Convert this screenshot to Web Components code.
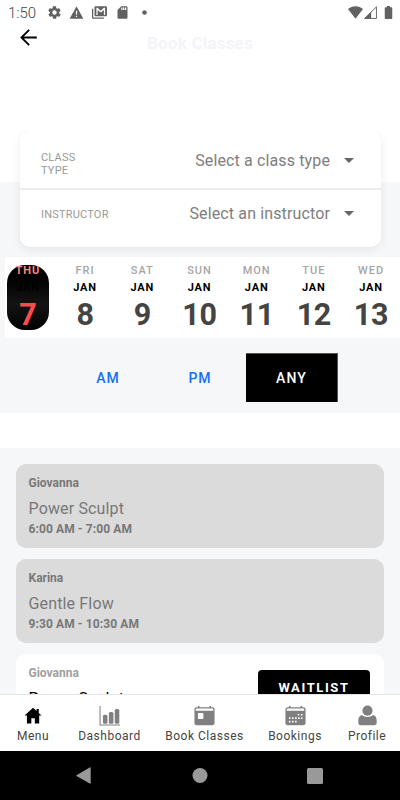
<!DOCTYPE html>
<html lang="en">
<head>
<meta charset="utf-8">
<meta name="viewport" content="width=device-width, initial-scale=1">
<title>Book Classes</title>
<style>
  html, body { margin: 0; height: 100%; }
  body {
    font-family: Roboto, "Liberation Sans", sans-serif;
    background: #fff;
    overflow: hidden;
  }
</style>
</head>
<body>
<booking-app></booking-app>

<script>
const ICONS = {
  gear: '<path d="M19.4 13c0-.3.1-.6.1-1s0-.7-.1-1l2.100-1.600c.2-.2.3-.4.100-.6l-2-3.500c-.1-.2-.4-.3-.6-.2l-2.500 1c-.5-.4-1.100-.7-1.700-1l-.4-2.600c0-.3-.2-.5-.5-.5h-4c-.3 0-.5.2-.5.4l-.4 2.700c-.6.2-1.100.6-1.700 1l-2.500-1c-.2-.1-.5 0-.6.2l-2 3.500c-.1.2-.1.5.1.600L4.600 11c0 .3-.1.7-.1 1s0 .7.1 1l-2.100 1.600c-.2.200-.3.400-.1.700l2 3.400c.1.200.4.300.6.200l2.500-1c.5.400 1.100.7 1.700 1l.4 2.700c0 .2.2.400.5.400h4c.3 0 .5-.2.5-.4l.4-2.700c.6-.2 1.100-.6 1.700-1l2.500 1c.2.100.5 0 .6-.2l2-3.400c.1-.2.1-.5-.1-.7zM12 15.500a3.500 3.500 0 1 1 0-7 3.500 3.500 0 0 1 0 7z"/>',
  warning: '<path d="M1 22h22L12 2zm12-3h-2v-2h2zm0-4h-2V9h2z"/>',
  mail: '<path d="M2 6H0v14c0 1.100.9 2 2 2h17v-2H2z"/><path fill-rule="evenodd" d="M6 2h16c1.100 0 2 .9 2 2v12c0 1.100-.9 2-2 2H6c-1.100 0-2-.9-2-2V4c0-1.100.9-2 2-2zm1 14h2V8l5 4 5-4v8h2V4.500h-2L14 9 9 4.500H7z"/>',
  sdcard: '<path d="M18 2h-8L4 8v12c0 1.100.9 2 2 2h12c1.100 0 2-.9 2-2V4c0-1.100-.9-2-2-2zm-6 6h-2V4h2zm3 0h-2V4h2zm3 0h-2V4h2z"/>',
  dot: '<circle cx="12" cy="12" r="3.700"/>',
  wifi: '<path d="M12 22L0 6.500C3 3.700 7.300 2 12 2s9 1.700 12 4.500z"/>',
  signal: '<path d="M2.500 21.500L21.500 3v18.500z" fill="none" stroke="currentColor" stroke-width="1.500"/><path d="M2.500 21.500L13 11v10.500z"/>',
  battery: '<path d="M16.500 3.500H14.500V1.500h-5v2h-2C6.700 3.500 6 4.200 6 5v16.200c0 .8.7 1.300 1.500 1.300h9c.8 0 1.500-.5 1.500-1.300V5c0-.8-.7-1.500-1.500-1.500z"/>',
  back: '<path d="M20 11.100H7.500l5.800-5.800L12 4l-8 8 8 8 1.300-1.300-5.800-5.800H20z"/>',
  home: '<path d="M11.500 3L1.800 12H4.500v9h5v-6h4v6h5v-9h2.700L18 9V4.500h-2.500v2.300z"/>',
  chart: '<path d="M1.200 1v21.800H24" fill="none" stroke="currentColor" stroke-width="1.200"/><rect x="4.500" y="11" width="5.200" height="10.500" rx="1.800"/><rect x="11.300" y="8" width="5.200" height="13.500" rx="1.800"/><rect x="18" y="4.500" width="5.200" height="17" rx="1.800"/>',
  calendar: '<path fill-rule="evenodd" d="M4.500 1h1.800v1.500h11.400V1h1.800v1.500H21c1.500 0 2.500 1 2.500 2.500v15.500c0 1.500-1 2.500-2.500 2.500H3C1.500 23 .5 22 .5 20.500V5c0-1.500 1-2.500 2.500-2.500h1.500zM2 5v1.700h20V5c0-.6-.4-1-1-1H3c-.6 0-1 .4-1 1zm2.500 5v5c0 .6.4 1 1 1h4.200c.6 0 1-.4 1-1v-5c0-.6-.4-1-1-1H5.500c-.6 0-1 .4-1 1z"/>',
  schedule: '<path fill-rule="evenodd" d="M4.500 1h1.800v1.500h11.400V1h1.800v1.500H21c1.500 0 2.500 1 2.500 2.500v15.500c0 1.500-1 2.500-2.500 2.500H3C1.500 23 .5 22 .5 20.500V5c0-1.500 1-2.500 2.500-2.500h1.500zM2 5v1.700h20V5c0-.6-.4-1-1-1H3c-.6 0-1 .4-1 1z"/><path d="M14.500 11.200h1.800m1.900 0H20M4.500 15h1.800m1.700 0h1.800m1.700 0h1.800m1.700 0h1.800m1.700 0H20M4.500 19h1.800m1.700 0h1.800m1.700 0h1.800" fill="none" stroke="#fff" stroke-width="1.800"/>',
  person: '<circle cx="12" cy="6.500" r="5.800"/><path d="M5.500 11.500c3.500 3 9.500 3 13 0 2.500.7 4 3 4 6V20c0 2-1 3-3 3h-15c-2 0-3-1-3-3v-2.500c0-3 1.500-5.300 4-6z"/>'
};

class AppIcon extends HTMLElement {
  constructor() {
    super();
    this.attachShadow({ mode: 'open' });
  }

  connectedCallback() {
    this.shadowRoot.innerHTML = `
      <style>
        :host { display: block; flex: none; width: var(--icon-size, 20px); height: var(--icon-size, 20px); }
        svg { display: block; width: 100%; height: 100%; }
      </style>
      <svg viewBox="0 0 24 24" fill="currentColor" aria-hidden="true">${ICONS[this.getAttribute('name')]}</svg>
    `;
  }
}
customElements.define('app-icon', AppIcon);

class StatusBar extends HTMLElement {
  constructor() {
    super();
    this.attachShadow({ mode: 'open' });
    this.shadowRoot.innerHTML = `
      <style>
        :host { display: flex; align-items: center; height: 25px; padding: 0 4.500px 0 8px; color: #616161; --icon-size: 15px; }
        .time { width: 38.500px; padding-top: 1px; font-size: 15px; line-height: 24px; font-weight: 300; color: #444; }
        .left, .right { display: flex; align-items: center; }
        .left { gap: 7.700px; flex: 1; }
        .right { gap: .5px; }
        .right app-icon:last-child { margin-left: 2px; }
      </style>
      <span class="time">1:50</span>
      <div class="left">
        <app-icon name="gear"></app-icon>
        <app-icon name="warning"></app-icon>
        <app-icon name="mail"></app-icon>
        <app-icon name="sdcard"></app-icon>
        <app-icon name="dot"></app-icon>
      </div>
      <div class="right">
        <app-icon name="wifi"></app-icon>
        <app-icon name="signal"></app-icon>
        <app-icon name="battery"></app-icon>
      </div>
    `;
  }
}
customElements.define('status-bar', StatusBar);

class AppHeader extends HTMLElement {
  constructor() {
    super();
    this.attachShadow({ mode: 'open' });
    this.shadowRoot.innerHTML = `
      <style>
        :host { display: grid; grid-template-columns: 44px 1fr 44px; height: 106px; align-items: start; }
        app-icon { --icon-size: 25px; margin: 0 0 0 16px; color: #000; }
        h1 { margin: 8px 0 0; font-size: 17px; line-height: 20px; font-weight: 700; letter-spacing: .2px; text-align: center; color: #f4f4f7; }
      </style>
      <app-icon name="back"></app-icon>
      <h1><slot></slot></h1>
    `;
  }
}
customElements.define('app-header', AppHeader);

class FilterRow extends HTMLElement {
  constructor() {
    super();
    this.attachShadow({ mode: 'open' });
    this.shadowRoot.innerHTML = `
      <style>
        :host { display: flex; align-items: flex-start; box-sizing: border-box; height: 57px; padding: 0 27px 0 21px; }
        :host(:not(:last-child)) { border-bottom: 2px solid #ebebeb; height: 59px; }
        .label { width: 72px; font-size: 11px; line-height: 13px; letter-spacing: .2px; color: #999; padding-top: var(--label-top, 20px); }
        .value { flex: 1; text-align: right; font-size: 16px; line-height: 20px; color: #7e7e7e; letter-spacing: .13px; padding-top: var(--value-top, 20px); }
        .caret { margin: var(--caret-top, 27px) 0 0 13.500px; border: 5px solid transparent; border-top-color: #666; border-bottom: 0; }
      </style>
      <span class="label"><slot name="label"></slot></span>
      <span class="value"><slot></slot></span>
      <span class="caret"></span>
    `;
  }
}
customElements.define('filter-row', FilterRow);

class FilterCard extends HTMLElement {
  constructor() {
    super();
    this.attachShadow({ mode: 'open' });
    this.shadowRoot.innerHTML = `
      <style>
        :host { display: block; padding: 0 19.500px 10px 20px; background: linear-gradient(#fff 51px, #f6f7f9 51px); }
        .card { height: 116px; border-radius: 10px; background: #fff; box-shadow: 0 2px 10px rgba(0, 0, 0, .08); clip-path: inset(0 -20px -20px -20px); }
        .second { --label-top: 18px; --value-top: 14px; --caret-top: 21px; }
      </style>
      <div class="card">
        <filter-row><span slot="label">CLASS<br>TYPE</span>Select a class type</filter-row>
        <filter-row class="second"><span slot="label">INSTRUCTOR</span>Select an instructor</filter-row>
      </div>
    `;
  }
}
customElements.define('filter-card', FilterCard);

class DayCell extends HTMLElement {
  constructor() {
    super();
    this.attachShadow({ mode: 'open' });
  }

  connectedCallback() {
    this.shadowRoot.innerHTML = `
      <style>
        :host { display: flex; justify-content: center; padding-top: 8px; }
        .pill { width: 42px; height: 65px; border-radius: 18px; display: flex; flex-direction: column; align-items: center; white-space: nowrap; }
        .week { font-size: 11px; line-height: 12px; letter-spacing: 1px; font-weight: 500; color: #a6a6a6; }
        .month { margin-top: 5px; font-size: 11px; line-height: 12px; letter-spacing: .8px; font-weight: 700; color: #000; }
        .date { margin-top: 5px; font-size: 30.500px; line-height: 31px; letter-spacing: -.3px; font-weight: 700; color: #444; }
        :host([selected]) .pill { background: linear-gradient(#000 20%, #141414 60%, #000); }
        :host([selected]) .week { color: #f28b8b; font-weight: 700; }
        :host([selected]) .month { color: #000; }
        :host([selected]) .date { color: #f84c4c; }
      </style>
      <div class="pill">
        <span class="week">${this.getAttribute('week')}</span>
        <span class="month">JAN</span>
        <span class="date">${this.getAttribute('date')}</span>
      </div>
    `;
  }
}
customElements.define('day-cell', DayCell);

class DateStrip extends HTMLElement {
  constructor() {
    super();
    this.attachShadow({ mode: 'open' });
    const days = ['THU', 'FRI', 'SAT', 'SUN', 'MON', 'TUE', 'WED'];
    this.shadowRoot.innerHTML = `
      <style>
        :host { display: block; height: 81px; background: linear-gradient(90deg, #f6f7f9 5px, #fff 5px); }
        .days { display: grid; grid-template-columns: repeat(7, 57.200px); margin-left: -.7px; }
      </style>
      <div class="days">
        ${days.map((week, i) => `<day-cell week="${week}" date="${i + 7}" ${i === 0 ? 'selected' : ''}></day-cell>`).join('')}
      </div>
    `;
  }
}
customElements.define('date-strip', DateStrip);

class PeriodTabs extends HTMLElement {
  constructor() {
    super();
    this.attachShadow({ mode: 'open' });
    this.shadowRoot.innerHTML = `
      <style>
        :host { display: flex; justify-content: center; box-sizing: border-box; height: 75px; padding: 15px 0 0; background: #f6f7f9; }
        button { box-sizing: border-box; width: 92px; height: 49px; padding: 1px 0 0; border: 0; background: none; font: 500 14px/48px Roboto, sans-serif; letter-spacing: .9px; color: #1470fb; }
        .active { padding: 0; background: #000; color: #fff; border: 1px solid #555; border-left: 0; border-bottom: 0; line-height: 47px; letter-spacing: 1.200px; }
      </style>
      <button>AM</button>
      <button>PM</button>
      <button class="active">ANY</button>
    `;
  }
}
customElements.define('period-tabs', PeriodTabs);

class ClassCard extends HTMLElement {
  constructor() {
    super();
    this.attachShadow({ mode: 'open' });
    this.shadowRoot.innerHTML = `
      <style>
        :host { display: flex; justify-content: space-between; box-sizing: border-box; flex: none; height: 84.500px; padding: 12px 14px 0 12.500px; border-radius: 10px; background: #fff; color: #000; --coach: #a0a0a0; }
        :host([past]) { background: #dbdbdb; color: #777; --coach: #777; }
        .info { display: flex; flex-direction: column; }
        .coach { font-size: 12px; line-height: 14px; font-weight: 700; color: var(--coach); }
        .name { margin-top: 9px; font-size: 16px; line-height: 20px; letter-spacing: .15px; }
        .time { margin-top: 3px; font-size: 12px; line-height: 14px; font-weight: 700; letter-spacing: .1px; }
      </style>
      <div class="info">
        <span class="coach"><slot name="coach"></slot></span>
        <span class="name"><slot></slot></span>
        <span class="time"><slot name="time"></slot></span>
      </div>
      <slot name="action"></slot>
    `;
  }
}
customElements.define('class-card', ClassCard);

class ClassList extends HTMLElement {
  constructor() {
    super();
    this.attachShadow({ mode: 'open' });
    this.shadowRoot.innerHTML = `
      <style>
        :host { display: flex; flex-direction: column; gap: 10.500px; margin-top: 34.500px; padding: 16px 16px 0; flex: 1; min-height: 0; overflow: hidden; background: #f6f7f9; }
        .waitlist { width: 112px; height: 40px; margin: 4px 0 0; border: 0; border-radius: 4px; padding: 0; background: #000; color: #fff; font: 700 13px/36px Roboto, sans-serif; letter-spacing: 1.600px; display: flex; justify-content: center; }
      </style>
      <class-card past>
        <span slot="coach">Giovanna</span>Power Sculpt<span slot="time">6:00 AM - 7:00 AM</span>
      </class-card>
      <class-card past>
        <span slot="coach">Karina</span>Gentle Flow<span slot="time">9:30 AM - 10:30 AM</span>
      </class-card>
      <class-card>
        <span slot="coach">Giovanna</span>Power Sculpt
        <div class="waitlist" role="button" slot="action">WAITLIST</div>
      </class-card>
    `;
  }
}
customElements.define('class-list', ClassList);

class TabBar extends HTMLElement {
  constructor() {
    super();
    this.attachShadow({ mode: 'open' });
    const tabs = [
      ['home', 'Menu'],
      ['chart', 'Dashboard'],
      ['calendar', 'Book Classes'],
      ['schedule', 'Bookings'],
      ['person', 'Profile']
    ];
    this.shadowRoot.innerHTML = `
      <style>
        :host { display: grid; grid-template-columns: 66px 87px 103px 78px 66px; box-sizing: border-box; height: 57px; border-top: 1px solid #e4e4e4; background: #fff; }
        .tab { display: flex; flex-direction: column; align-items: center; padding-top: 10px; color: #808080; --icon-size: 21px; }
        .tab:first-of-type { color: #000; }
        span { margin-top: 3px; font-size: 12px; line-height: 14px; letter-spacing: .5px; color: #444; white-space: nowrap; }
      </style>
      ${tabs.map(([icon, label]) => `<div class="tab"><app-icon name="${icon}"></app-icon><span>${label}</span></div>`).join('')}
    `;
  }
}
customElements.define('tab-bar', TabBar);

class SystemNav extends HTMLElement {
  constructor() {
    super();
    this.attachShadow({ mode: 'open' });
    this.shadowRoot.innerHTML = `
      <style>
        :host { display: flex; justify-content: center; height: 49px; background: #000; }
        svg { width: 115px; height: 49px; fill: #999; }
      </style>
      <svg viewBox="0 0 115 49"><path d="M48.500 24.200L61.700 16.500Q62.700 16 62.700 17V32Q62.700 33 61.700 32.400L48.500 25Q47.700 24.600 48.500 24.200z"/></svg>
      <svg viewBox="0 0 115 49"><circle cx="57" cy="24.500" r="7.500"/></svg>
      <svg viewBox="0 0 115 49"><rect x="49" y="17" width="16" height="16" rx="1.500"/></svg>
    `;
  }
}
customElements.define('system-nav', SystemNav);

class BookingApp extends HTMLElement {
  constructor() {
    super();
    this.attachShadow({ mode: 'open' });
    this.shadowRoot.innerHTML = `
      <style>
        :host { display: flex; flex-direction: column; width: 400px; height: 800px; overflow: hidden; background: #fff; }
        status-bar, app-header, filter-card, date-strip, period-tabs, tab-bar, system-nav { flex: none; }
      </style>
      <status-bar></status-bar>
      <app-header>Book Classes</app-header>
      <filter-card></filter-card>
      <date-strip></date-strip>
      <period-tabs></period-tabs>
      <class-list></class-list>
      <tab-bar></tab-bar>
      <system-nav></system-nav>
    `;
  }
}
customElements.define('booking-app', BookingApp);
</script>
</body>
</html>
